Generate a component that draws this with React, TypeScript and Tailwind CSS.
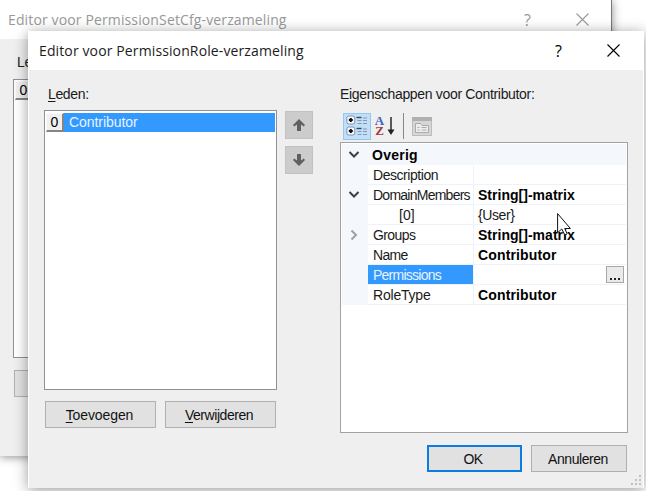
import type { ReactNode } from "react";

const ui = "font-['Liberation_Sans',Arial,sans-serif]";
const titleFont = "font-['Open_Sans','Segoe_UI',sans-serif]";

function Label({ children, className = "" }: { children: ReactNode; className?: string }) {
  return <span className={`inline-block whitespace-nowrap leading-[20px] ${className}`}>{children}</span>;
}

function Key({ children }: { children: ReactNode }) {
  return <span className="underline decoration-1 underline-offset-2">{children}</span>;
}

function TitleBar({ title, active = false }: { title: string; active?: boolean }) {
  return (
    <div className={`flex h-[39px] shrink-0 items-center bg-white ${titleFont} ${active ? "text-black" : "text-[#999]"}`}>
      <Label className={active ? "ml-[11px] text-[14px] tracking-[0.12px] text-[#1c1c1c]" : "ml-2 text-[14px] tracking-[0.13px]"}>{title}</Label>
      <span className="mr-[45px] ml-auto text-[16px] leading-[20px]">?</span>
      <svg width="13" height="13" viewBox="0 0 13 13" className={active ? "mr-[24px]" : "mr-[22px]"}>
        <path d="M.5.5l12 12M12.5.5l-12 12" stroke="currentColor" strokeWidth="1.1" fill="none" />
      </svg>
    </div>
  );
}

function Arrow({ down = false }: { down?: boolean }) {
  return (
    <div className="flex h-7 w-7 items-center justify-center border border-[#c2c2c2] bg-[#cccccc]">
      <svg width="12" height="12" viewBox="0 0 12 12" className={down ? "rotate-180" : ""}>
        <path d="M6 0l6 6-1.200 1.500L8 5.500V12H4V5.500L1.200 7.500 0 6z" fill="#606060" />
      </svg>
    </div>
  );
}

function Button({ children, primary = false, className = "" }: { children: ReactNode; primary?: boolean; className?: string }) {
  return (
    <div
      className={`flex items-center justify-center bg-[#e1e1e1] text-[14px] text-[#111] ${
        primary ? "border-2 border-[#0a7ddd]" : "border border-[#b0b0b0]"
      } ${className}`}
    >
      {children}
    </div>
  );
}

function Chevron({ open }: { open: boolean }) {
  return (
    <svg width="12" height="12" viewBox="0 0 12 12" fill="none" strokeWidth="2">
      {open ? <path d="M1.500 3l4.500 4.500L10.500 3" stroke="#404040" /> : <path d="M3.500 1.500l4.500 4.500-4.500 4.500" stroke="#a0a0a0" />}
    </svg>
  );
}

type Row = { name: string; value: string; bold?: boolean; open?: boolean; sub?: boolean; selected?: boolean; nameCls: string; valueCls?: string };

const rows: Row[] = [
  { name: "Description", value: "", nameCls: "tracking-[-0.45px]" },
  { name: "DomainMembers", value: "String[]-matrix", bold: true, open: true, nameCls: "tracking-[-0.75px]", valueCls: "tracking-[0.02px]" },
  { name: "[0]", value: "{User}", sub: true, nameCls: "", valueCls: "tracking-[-0.4px]" },
  { name: "Groups", value: "String[]-matrix", bold: true, open: false, nameCls: "tracking-[-0.6px]", valueCls: "tracking-[0.02px]" },
  { name: "Name", value: "Contributor", bold: true, nameCls: "tracking-[-0.7px]", valueCls: "tracking-[0.15px]" },
  { name: "Permissions", value: "", selected: true, nameCls: "tracking-[-0.75px]" },
  { name: "RoleType", value: "Contributor", bold: true, nameCls: "tracking-[-0.2px]", valueCls: "tracking-[0.15px]" },
];

function PropertyRow({ row }: { row: Row }) {
  return (
    <div className="flex h-5">
      <div className="flex w-[26px] items-center justify-center bg-[#f4f7fc] pr-[3px]">
        {row.open !== undefined && <Chevron open={row.open} />}
      </div>
      <div
        className={`w-[105px] border-b border-[#eef3fb] ${row.sub ? "pl-[31px]" : "pl-[5px]"} ${
          row.selected ? "bg-[#3399ff] text-[#e8f3ff]" : ""
        }`}
      >
        <Label className={row.nameCls}>{row.name}</Label>
      </div>
      <div className="flex flex-1 justify-between border-b border-l border-[#eef3fb] pl-1">
        <Label className={`${row.bold ? "font-bold text-black" : ""} ${row.valueCls ?? ""}`}>{row.value}</Label>
        {row.selected && (
          <div className="mt-px mr-[2px] flex h-[17px] w-[18px] items-end justify-center gap-[2px] border border-[#a8a8a8] bg-[#eaeaea] pb-[2px]">
            <i className="h-[2px] w-[2px] bg-[#222]" />
            <i className="h-[2px] w-[2px] bg-[#222]" />
            <i className="h-[2px] w-[2px] bg-[#222]" />
          </div>
        )}
      </div>
    </div>
  );
}

function IndexBox() {
  return (
    <div className="flex h-[19px] w-[18px] shrink-0 items-center justify-center border-t border-r-2 border-b-2 border-l border-t-[#f8f8f8] border-r-[#858585] border-b-[#858585] border-l-[#f8f8f8] bg-[#f0f0f0] text-[14px] leading-[16px] text-black">
      0
    </div>
  );
}

function CategorizedIcon() {
  return (
    <svg width="22" height="22" viewBox="0 0 22 22">
      {[1, 12].map((y) => (
        <g key={y}>
          <rect x=".8" y={y} width="8" height="8" rx="2" fill="#f5f8ff" stroke="#7895be" />
          <path d={`M2.800 ${y + 4}h4M4.800 ${y + 2}v4`} stroke="#111" strokeWidth="2" />
          <path d={`M10.500 ${y + 1.5}h5`} stroke="#34475f" strokeWidth="1.4" />
          <path d={`M11.500 ${y + 4.5}h4M11.500 ${y + 7.5}h4M17 ${y + 2}h4M17 ${y + 4.5}h4M17 ${y + 7.5}h4`} stroke="#8098b6" strokeWidth="1.2" />
        </g>
      ))}
    </svg>
  );
}

function FrontWindow() {
  return (
    <div className={`absolute top-[31px] left-[28px] flex h-[457px] w-[616px] flex-col bg-[#efefef] text-[14px] text-[#1a1a1a] shadow-[0_2px_13px_rgba(0,0,0,0.4)] ${ui}`}>
      <TitleBar title="Editor voor PermissionRole-verzameling" active />
      <div className="flex flex-1 flex-col border-x border-white pl-[15px]">
        <div className="flex h-[364px]">
          <div className="w-[233px] pt-[14px]">
            <Label className="ml-1 tracking-[-0.35px]"><Key>L</Key>eden:</Label>
            <div className="mt-[5px] h-[280px] border border-[#8c9299] bg-white p-px">
              <div className="mt-px flex h-[19px]">
                <IndexBox />
                <div className="flex flex-1 items-center bg-[#3399ff] pl-[5px] text-[#e8f3ff]">
                  <Label className="-mt-px tracking-[-0.05px]">Contributor</Label>
                </div>
              </div>
            </div>
            <div className="mt-[11px] ml-px flex gap-[9px]">
              <Button className="h-[27px] w-[111px]"><Label className="mr-[2px] tracking-[-0.1px]"><Key>T</Key>oevoegen</Label></Button>
              <Button className="h-[27px] w-[111px]"><Label className="mr-[3px] tracking-[-0.45px]"><Key>V</Key>erwijderen</Label></Button>
            </div>
          </div>
          <div className="ml-2 flex flex-col gap-[7px] pt-[41px]">
            <Arrow />
            <Arrow down />
          </div>
          <div className="ml-[27px] w-[288px] pt-[14px]">
            <Label className="tracking-[-0.33px]">E<Key>i</Key>genschappen voor Contributor:</Label>
            <div className="mt-[7px] ml-[3px] flex h-[28px] items-center">
              <div className="flex h-[27px] w-[28px] items-center justify-center border border-[#90c8f6] bg-[#c2dff5]"><CategorizedIcon /></div>
              <div className="ml-[4px] flex w-[9px] flex-col items-center font-['Liberation_Serif',serif] text-[13px] leading-[10px] font-bold">
                <span className="text-[#3e62ba]">A</span>
                <span className="text-[#a13a40]">Z</span>
              </div>
              <svg width="8" height="20" viewBox="0 0 8 20" className="ml-[3px]">
                <path d="M4 1v15" stroke="#333" strokeWidth="1.6" />
                <path d="M.5 13.500h7L4 19z" fill="#222" />
              </svg>
              <div className="ml-[8px] h-[26px] w-px bg-[#888]" />
              <svg width="20" height="19" viewBox="0 0 20 19" className="ml-[8px]">
                <rect x=".5" y=".5" width="19" height="18" fill="#d6d6d6" stroke="#bcbcbc" />
                <path d="M0 2h20" stroke="#b0b0b0" strokeWidth="4" />
                <path d="M3.500 15.500v-9h5l1.500 2h6.500v7z" fill="#eee" stroke="#aaa" />
                <path d="M5.500 10.500h2m2 0h5m-9 2.500h2m2 0h5" stroke="#aaa" />
              </svg>
            </div>
            <div className="mt-[2px] h-[291px] border border-[#a2a2a2] bg-white p-px">
              <div className="flex h-[21px] items-end bg-[#f4f7fc]">
                <div className="flex h-5 w-[26px] items-center justify-center pr-[3px]"><Chevron open /></div>
                <Label className="pl-[4px] font-bold tracking-[0.25px] text-black">Overig</Label>
              </div>
              {rows.map((row) => <PropertyRow key={row.name} row={row} />)}
            </div>
          </div>
        </div>
        <div className="mt-[11px] ml-[383px] flex gap-[9px]">
          <Button primary className="h-[27px] w-[95px]"><Label className="mr-[3px] tracking-[-0.7px]">OK</Label></Button>
          <Button className="h-[27px] w-[96px]"><Label className="mr-[2px] tracking-[-0.45px]">Annuleren</Label></Button>
        </div>
        <svg width="10" height="10" viewBox="0 0 10 10" className="mt-[3px] mr-[2px] ml-auto">
          <path d="M8 0h2v2H8zM4 4h2v2H4zM8 4h2v2H8zM0 8h2v2H0zM4 8h2v2H4zM8 8h2v2H8z" fill="#c0c0c0" />
        </svg>
      </div>
    </div>
  );
}

function BackWindow() {
  return (
    <div className={`absolute top-0 left-0 flex h-[456px] w-[612px] flex-col border-r border-[#777] bg-[#efefef] text-[14px] text-[#222] shadow-[0_1px_9px_rgba(0,0,0,0.45)] ${ui}`}>
      <TitleBar title="Editor voor PermissionSetCfg-verzameling" />
      <div className="pt-[13px] pl-[13px]">
        <Label className="ml-[4px] w-[12px] overflow-hidden tracking-[-0.35px]">Leden:</Label>
        <div className="mt-px h-[279px] w-[233px] border border-[#8c9299] bg-white p-px"><IndexBox /></div>
        <Button className="mt-[12px] ml-px h-[27px] w-[111px]">{null}</Button>
      </div>
    </div>
  );
}

export default function App() {
  return (
    <div className="relative h-[491px] w-[646px] overflow-hidden bg-white">
      <BackWindow />
      <FrontWindow />
      <svg width="17" height="24" viewBox="0 0 17 24" className="absolute top-[213px] left-[557px]">
        <path d="M.6.6v19l4.200-3.600 3 6 2.400-1.200-2.500-5.300h5.700z" fill="white" stroke="#111" strokeWidth="1" />
      </svg>
    </div>
  );
}
